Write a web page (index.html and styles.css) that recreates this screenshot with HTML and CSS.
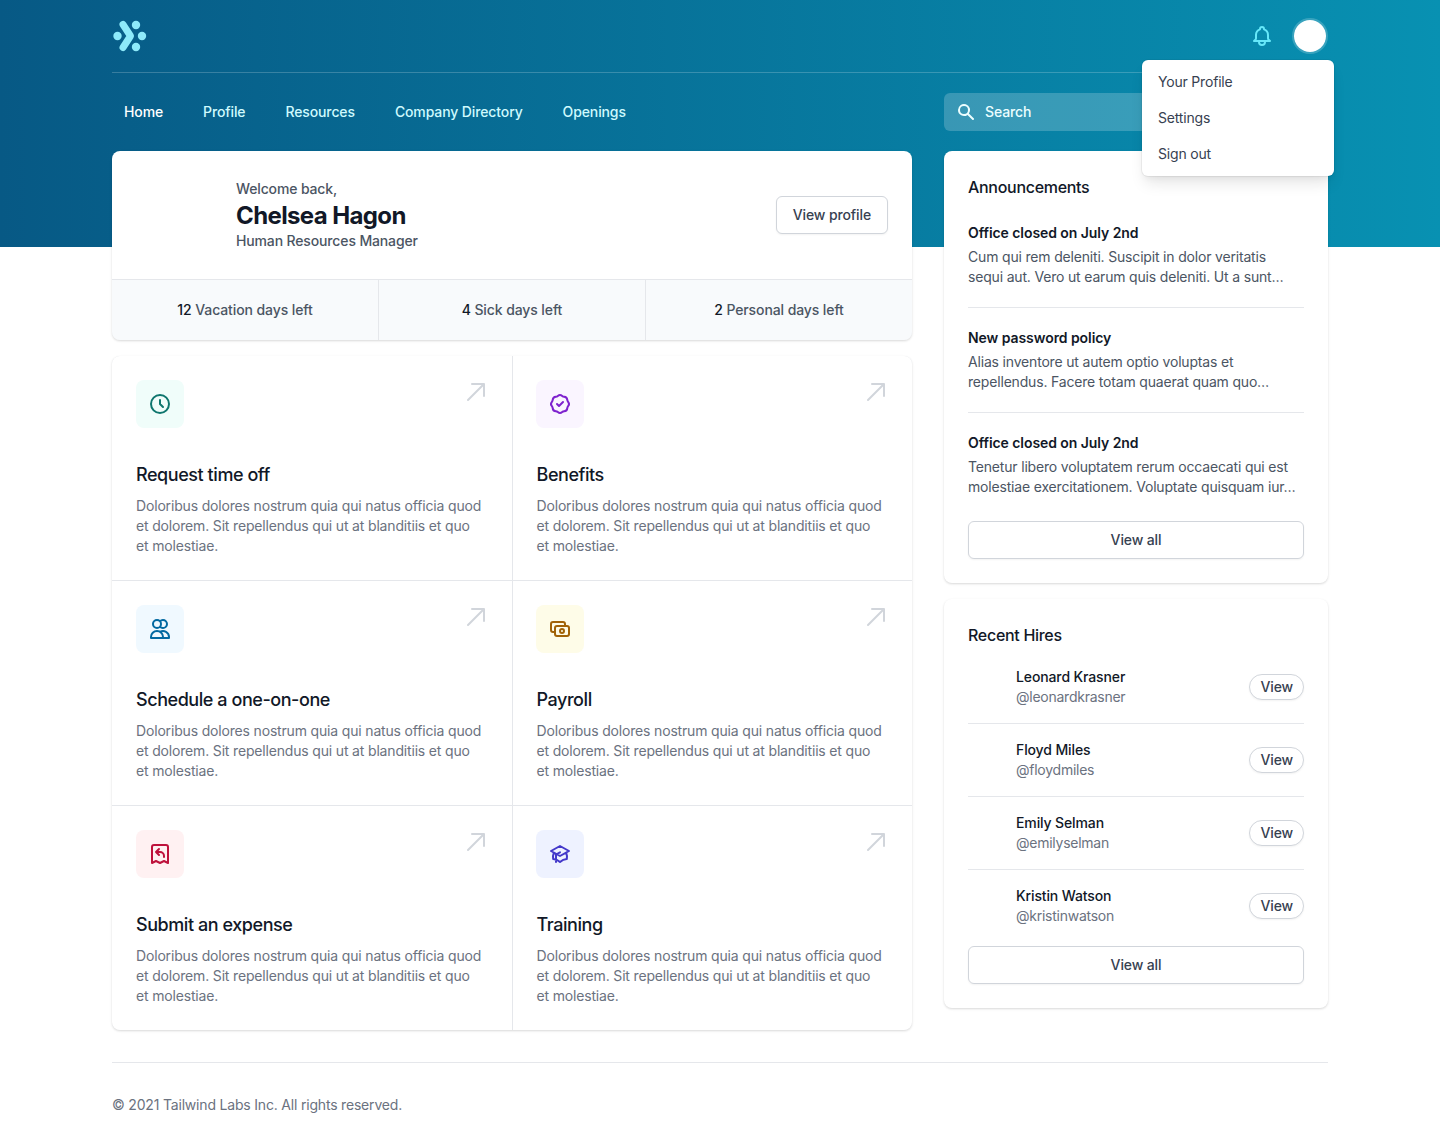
FILE: index.html
```html
<!DOCTYPE html>
<html lang="en">
<head>
<meta charset="utf-8">
<title>Dashboard</title>
<link rel="stylesheet" href="styles.css">
</head>
<body>
<header class="hero">
  <div class="container">
    <div class="topbar">
      <svg class="logo" viewBox="0 0 36 36" width="36" height="36" aria-hidden="true">
        <circle cx="5.5" cy="18" r="4.2"/><circle cx="24" cy="7" r="4.2"/><circle cx="30" cy="18" r="4.2"/><circle cx="24" cy="29" r="4.2"/>
        <path class="logo-chevron" d="M11 6.5 18.5 18 11 29.5"/>
      </svg>
      <div class="top-actions">
        <svg class="bell" viewBox="0 0 24 24" width="24" height="24" aria-hidden="true"><path d="M15 17h5l-1.405-1.405A2.032 2.032 0 0118 14.158V11a6.002 6.002 0 00-4-5.659V5a2 2 0 10-4 0v.341C7.67 6.165 6 8.388 6 11v3.159c0 .538-.214 1.055-.595 1.436L4 17h5m6 0v1a3 3 0 11-6 0v-1m6 0H9"/></svg>
        <div class="user">
          <div class="user-avatar"></div>
          <div class="menu">
            <div class="menu-item">Your Profile</div>
            <div class="menu-item">Settings</div>
            <div class="menu-item">Sign out</div>
          </div>
        </div>
      </div>
    </div>
    <div class="navrow">
      <nav class="nav">
        <a class="nav-link nav-active">Home</a>
        <a class="nav-link">Profile</a>
        <a class="nav-link">Resources</a>
        <a class="nav-link">Company Directory</a>
        <a class="nav-link">Openings</a>
      </nav>
      <div class="search">
        <svg viewBox="0 0 20 20" width="20" height="20" aria-hidden="true"><path fill-rule="evenodd" clip-rule="evenodd" d="M8 4a4 4 0 100 8 4 4 0 000-8zM2 8a6 6 0 1110.89 3.476l4.817 4.817a1 1 0 01-1.414 1.414l-4.816-4.816A6 6 0 012 8z"/></svg>
        <span>Search</span>
      </div>
    </div>
  </div>
</header>

<main class="container main">
  <div class="left">
    <section class="card">
      <div class="welcome">
        <div class="welcome-photo"></div>
        <div class="welcome-text">
          <p class="welcome-line">Welcome back,</p>
          <p class="welcome-name">Chelsea Hagon</p>
          <p class="welcome-line">Human Resources Manager</p>
        </div>
        <a class="btn btn-profile">View profile</a>
      </div>
      <div class="stats">
        <div class="stat"><b>12</b> Vacation days left</div>
        <div class="stat"><b>4</b> Sick days left</div>
        <div class="stat"><b>2</b> Personal days left</div>
      </div>
    </section>

    <section class="card actions">
      <article class="action">
        <svg class="arrow" viewBox="0 0 24 24" width="24" height="24" aria-hidden="true"><path d="M20 4h1a1 1 0 00-1-1v1zm-1 12a1 1 0 102 0h-2zM8 3a1 1 0 000 2V3zM3.293 19.293a1 1 0 101.414 1.414l-1.414-1.414zM19 4v12h2V4h-2zm1-1H8v2h12V3zm-.707.293l-16 16 1.414 1.414 16-16-1.414-1.414z"/></svg>
        <div class="tile tile-teal"><svg viewBox="0 0 24 24" width="24" height="24" aria-hidden="true"><path d="M12 8v4l3 3m6-3a9 9 0 11-18 0 9 9 0 0118 0z"/></svg></div>
        <h3 class="action-title">Request time off</h3>
        <p class="action-text">Doloribus dolores nostrum quia qui natus officia quod et dolorem. Sit repellendus qui ut at blanditiis et quo et molestiae.</p>
      </article>
      <article class="action">
        <svg class="arrow" viewBox="0 0 24 24" width="24" height="24" aria-hidden="true"><path d="M20 4h1a1 1 0 00-1-1v1zm-1 12a1 1 0 102 0h-2zM8 3a1 1 0 000 2V3zM3.293 19.293a1 1 0 101.414 1.414l-1.414-1.414zM19 4v12h2V4h-2zm1-1H8v2h12V3zm-.707.293l-16 16 1.414 1.414 16-16-1.414-1.414z"/></svg>
        <div class="tile tile-purple"><svg viewBox="0 0 24 24" width="24" height="24" aria-hidden="true"><path d="M9 12l2 2 4-4M7.835 4.697a3.42 3.42 0 001.946-.806 3.42 3.42 0 014.438 0 3.42 3.42 0 001.946.806 3.42 3.42 0 013.138 3.138 3.42 3.42 0 00.806 1.946 3.42 3.42 0 010 4.438 3.42 3.42 0 00-.806 1.946 3.42 3.42 0 01-3.138 3.138 3.42 3.42 0 00-1.946.806 3.42 3.42 0 01-4.438 0 3.42 3.42 0 00-1.946-.806 3.42 3.42 0 01-3.138-3.138 3.42 3.42 0 00-.806-1.946 3.42 3.42 0 010-4.438 3.42 3.42 0 00.806-1.946 3.42 3.42 0 013.138-3.138z"/></svg></div>
        <h3 class="action-title">Benefits</h3>
        <p class="action-text">Doloribus dolores nostrum quia qui natus officia quod et dolorem. Sit repellendus qui ut at blanditiis et quo et molestiae.</p>
      </article>
      <article class="action">
        <svg class="arrow" viewBox="0 0 24 24" width="24" height="24" aria-hidden="true"><path d="M20 4h1a1 1 0 00-1-1v1zm-1 12a1 1 0 102 0h-2zM8 3a1 1 0 000 2V3zM3.293 19.293a1 1 0 101.414 1.414l-1.414-1.414zM19 4v12h2V4h-2zm1-1H8v2h12V3zm-.707.293l-16 16 1.414 1.414 16-16-1.414-1.414z"/></svg>
        <div class="tile tile-blue"><svg viewBox="0 0 24 24" width="24" height="24" aria-hidden="true"><path d="M12 4.354a4 4 0 110 5.292M15 21H3v-1a6 6 0 0112 0v1zm0 0h6v-1a6 6 0 00-9-5.197M13 7a4 4 0 11-8 0 4 4 0 018 0z"/></svg></div>
        <h3 class="action-title">Schedule a one-on-one</h3>
        <p class="action-text">Doloribus dolores nostrum quia qui natus officia quod et dolorem. Sit repellendus qui ut at blanditiis et quo et molestiae.</p>
      </article>
      <article class="action">
        <svg class="arrow" viewBox="0 0 24 24" width="24" height="24" aria-hidden="true"><path d="M20 4h1a1 1 0 00-1-1v1zm-1 12a1 1 0 102 0h-2zM8 3a1 1 0 000 2V3zM3.293 19.293a1 1 0 101.414 1.414l-1.414-1.414zM19 4v12h2V4h-2zm1-1H8v2h12V3zm-.707.293l-16 16 1.414 1.414 16-16-1.414-1.414z"/></svg>
        <div class="tile tile-yellow"><svg viewBox="0 0 24 24" width="24" height="24" aria-hidden="true"><path d="M17 9V7a2 2 0 00-2-2H5a2 2 0 00-2 2v6a2 2 0 002 2h2m2 4h10a2 2 0 002-2v-6a2 2 0 00-2-2H9a2 2 0 00-2 2v6a2 2 0 002 2zm7-5a2 2 0 11-4 0 2 2 0 014 0z"/></svg></div>
        <h3 class="action-title">Payroll</h3>
        <p class="action-text">Doloribus dolores nostrum quia qui natus officia quod et dolorem. Sit repellendus qui ut at blanditiis et quo et molestiae.</p>
      </article>
      <article class="action">
        <svg class="arrow" viewBox="0 0 24 24" width="24" height="24" aria-hidden="true"><path d="M20 4h1a1 1 0 00-1-1v1zm-1 12a1 1 0 102 0h-2zM8 3a1 1 0 000 2V3zM3.293 19.293a1 1 0 101.414 1.414l-1.414-1.414zM19 4v12h2V4h-2zm1-1H8v2h12V3zm-.707.293l-16 16 1.414 1.414 16-16-1.414-1.414z"/></svg>
        <div class="tile tile-rose"><svg viewBox="0 0 24 24" width="24" height="24" aria-hidden="true"><path d="M16 15v-1a4 4 0 00-4-4H8m0 0l3 3m-3-3l3-3m9 14V5a2 2 0 00-2-2H6a2 2 0 00-2 2v16l4-2 4 2 4-2 4 2z"/></svg></div>
        <h3 class="action-title">Submit an expense</h3>
        <p class="action-text">Doloribus dolores nostrum quia qui natus officia quod et dolorem. Sit repellendus qui ut at blanditiis et quo et molestiae.</p>
      </article>
      <article class="action">
        <svg class="arrow" viewBox="0 0 24 24" width="24" height="24" aria-hidden="true"><path d="M20 4h1a1 1 0 00-1-1v1zm-1 12a1 1 0 102 0h-2zM8 3a1 1 0 000 2V3zM3.293 19.293a1 1 0 101.414 1.414l-1.414-1.414zM19 4v12h2V4h-2zm1-1H8v2h12V3zm-.707.293l-16 16 1.414 1.414 16-16-1.414-1.414z"/></svg>
        <div class="tile tile-indigo"><svg viewBox="0 0 24 24" width="24" height="24" aria-hidden="true"><path d="M12 14l9-5-9-5-9 5 9 5zm0 0l6.16-3.422a12.083 12.083 0 01.665 6.479A11.952 11.952 0 0012 20.055a11.952 11.952 0 00-6.824-2.998 12.078 12.078 0 01.665-6.479L12 14zm-4 6v-7.5l4-2.222"/></svg></div>
        <h3 class="action-title">Training</h3>
        <p class="action-text">Doloribus dolores nostrum quia qui natus officia quod et dolorem. Sit repellendus qui ut at blanditiis et quo et molestiae.</p>
      </article>
    </section>
  </div>

  <aside class="right">
    <section class="card panel">
      <h2 class="panel-title">Announcements</h2>
      <ul class="list">
        <li class="news">
          <h3 class="news-title">Office closed on July 2nd</h3>
          <p class="news-text">Cum qui rem deleniti. Suscipit in dolor veritatis sequi aut. Vero ut earum quis deleniti. Ut a sunt…</p>
        </li>
        <li class="news">
          <h3 class="news-title">New password policy</h3>
          <p class="news-text">Alias inventore ut autem optio voluptas et repellendus. Facere totam quaerat quam quo…</p>
        </li>
        <li class="news">
          <h3 class="news-title">Office closed on July 2nd</h3>
          <p class="news-text">Tenetur libero voluptatem rerum occaecati qui est molestiae exercitationem. Voluptate quisquam iur…</p>
        </li>
      </ul>
      <a class="btn btn-wide">View all</a>
    </section>

    <section class="card panel">
      <h2 class="panel-title">Recent Hires</h2>
      <ul class="list">
        <li class="hire">
          <div class="hire-photo"></div>
          <div class="hire-text"><p class="hire-name">Leonard Krasner</p><p class="hire-handle">@leonardkrasner</p></div>
          <a class="pill">View</a>
        </li>
        <li class="hire">
          <div class="hire-photo"></div>
          <div class="hire-text"><p class="hire-name">Floyd Miles</p><p class="hire-handle">@floydmiles</p></div>
          <a class="pill">View</a>
        </li>
        <li class="hire">
          <div class="hire-photo"></div>
          <div class="hire-text"><p class="hire-name">Emily Selman</p><p class="hire-handle">@emilyselman</p></div>
          <a class="pill">View</a>
        </li>
        <li class="hire">
          <div class="hire-photo"></div>
          <div class="hire-text"><p class="hire-name">Kristin Watson</p><p class="hire-handle">@kristinwatson</p></div>
          <a class="pill">View</a>
        </li>
      </ul>
      <a class="btn btn-wide">View all</a>
    </section>
  </aside>
</main>

<footer class="container">
  <div class="footer">© 2021 Tailwind Labs Inc. All rights reserved.</div>
</footer>
</body>
</html>
```

FILE: styles.css
```css
* { box-sizing: border-box; }
html, body { margin: 0; padding: 0; }
body {
  background: #fff;
  color: #111827;
  font-family: Inter, "Liberation Sans", sans-serif;
  font-size: 14px;
  line-height: 20px;
  letter-spacing: -0.19px;
}
h2, h3, p, ul { margin: 0; padding: 0; }
ul { list-style: none; }

.container { width: 1216px; margin: 0 auto; }

.hero {
  height: 247px;
  background: linear-gradient(to right, #075985, #0891b2);
}
.topbar {
  height: 73px;
  display: flex;
  align-items: center;
  justify-content: space-between;
  border-bottom: 1px solid rgba(255, 255, 255, .2);
}
.logo { fill: #8eeafa; display: block; }
.logo-chevron {
  fill: none;
  stroke: #8eeafa;
  stroke-width: 7;
  stroke-linecap: round;
  stroke-linejoin: round;
}
.top-actions { display: flex; align-items: center; gap: 18px; }
.bell { fill: none; stroke: #67e8f9; stroke-width: 2; stroke-linecap: round; stroke-linejoin: round; display: block; }
.user { position: relative; width: 36px; height: 36px; }
.user-avatar {
  width: 36px;
  height: 36px;
  border-radius: 50%;
  background: #fff;
  background-clip: padding-box;
  border: 2px solid rgba(255, 255, 255, .2);
}
.menu {
  position: absolute;
  top: 42px;
  right: -6px;
  width: 192px;
  padding: 4px 0;
  background: #fff;
  border-radius: 6px;
  box-shadow: 0 10px 15px -3px rgba(0,0,0,.1), 0 4px 6px -2px rgba(0,0,0,.05), 0 0 0 1px rgba(0,0,0,.05);
  z-index: 5;
}
.menu-item { padding: 8px 16px; color: #374151; }

.navrow {
  height: 78px;
  display: grid;
  grid-template-columns: 800px 384px;
  column-gap: 32px;
  align-items: center;
}
.nav { display: flex; gap: 16px; }
.nav-link { padding: 8px 12px; font-weight: 500; letter-spacing: -0.12px; color: #cffafe; }
.nav-active { color: #fff; }
.search {
  height: 38px;
  display: flex;
  align-items: center;
  gap: 9px;
  padding-left: 12px;
  border-radius: 6px;
  background: rgba(255, 255, 255, .2);
  color: #fff;
  font-weight: 500;
  letter-spacing: -0.12px;
}
.search svg { fill: #ecfeff; display: block; }
.search span { color: #ecfeff; }

.main {
  position: relative;
  margin-top: -96px;
  display: grid;
  grid-template-columns: 800px 384px;
  column-gap: 32px;
  align-items: start;
}
.left, .right { display: flex; flex-direction: column; gap: 16px; }

.card {
  background: #fff;
  border-radius: 8px;
  overflow: hidden;
  box-shadow: 0 1px 3px rgba(0,0,0,.1), 0 1px 2px rgba(0,0,0,.06);
}

.welcome {
  height: 128px;
  padding: 24px;
  display: flex;
  align-items: center;
  gap: 20px;
}
.welcome-photo { width: 80px; height: 80px; flex: none; }
.welcome-text { flex: 1; }
.welcome-line { font-weight: 500; letter-spacing: -0.14px; color: #4b5563; }
.welcome-name {
  padding-top: 2px;
  font-size: 24px;
  line-height: 30px;
  font-weight: 700;
  letter-spacing: -0.62px;
  color: #111827;
}

.btn {
  display: flex;
  align-items: center;
  justify-content: center;
  height: 38px;
  border: 1px solid #d1d5db;
  border-radius: 6px;
  background: #fff;
  color: #374151;
  font-weight: 500;
  letter-spacing: -0.12px;
  box-shadow: 0 1px 2px rgba(0,0,0,.05);
}
.btn-profile { padding: 0 16px; }
.btn-wide { margin-top: 4px; }

.stats {
  display: grid;
  grid-template-columns: repeat(3, 1fr);
  column-gap: 1px;
  background: #e5e7eb;
  border-top: 1px solid #e5e7eb;
}
.stat {
  padding: 20px 24px;
  background: #f8fafc;
  text-align: center;
  font-weight: 500;
  letter-spacing: -0.1px;
  color: #4b5563;
}
.stat b { font-weight: 500; color: #111827; }

.actions {
  display: grid;
  grid-template-columns: 1fr 1fr;
  gap: 1px;
  background: #e5e7eb;
}
.action { position: relative; padding: 24px; background: #fff; }
.arrow { position: absolute; top: 24px; right: 24px; fill: #d1d5db; }
.tile {
  width: 48px;
  height: 48px;
  border-radius: 8px;
  display: flex;
  align-items: center;
  justify-content: center;
}
.action:nth-child(even) .tile { margin-left: -0.5px; }
.tile svg { fill: none; stroke: currentColor; stroke-width: 2; stroke-linecap: round; stroke-linejoin: round; display: block; }
.tile-teal { background: #f0fdfa; color: #0f766e; }
.tile-purple { background: #faf5ff; color: #7e22ce; }
.tile-blue { background: #f0f9ff; color: #0369a1; }
.tile-yellow { background: #fefce8; color: #a16207; }
.tile-rose { background: #fff1f2; color: #be123c; }
.tile-indigo { background: #eef2ff; color: #4338ca; }
.action-title {
  margin-top: 33px;
  font-size: 18px;
  line-height: 28px;
  font-weight: 500;
  letter-spacing: -0.44px;
  color: #111827;
}
.action-text { margin-top: 7px; max-width: 347px; letter-spacing: -0.17px; color: #6b7280; }

.panel { padding: 24px; }
.panel-title {
  font-size: 16px;
  line-height: 24px;
  font-weight: 500;
  letter-spacing: -0.3px;
  color: #111827;
  margin-bottom: 4px;
}

.news { padding: 20px 0; border-bottom: 1px solid #e5e7eb; }
.news:last-child { border-bottom: 0; }
.news-title { font-size: 14px; line-height: 20px; font-weight: 600; letter-spacing: -0.07px; color: #111827; }
.news-text { margin-top: 4px; letter-spacing: -0.18px; color: #4b5563; }

.hire {
  display: flex;
  align-items: center;
  gap: 16px;
  padding: 16px 0;
  border-bottom: 1px solid #e5e7eb;
}
.hire:last-child { border-bottom: 0; }
.hire-photo { width: 32px; height: 32px; flex: none; }
.hire-text { flex: 1; }
.hire-name { font-weight: 500; letter-spacing: -0.12px; color: #111827; }
.hire-handle { letter-spacing: -0.25px; color: #6b7280; }
.pill {
  padding: 2px 10px;
  border: 1px solid #d1d5db;
  border-radius: 999px;
  background: #fff;
  color: #374151;
  font-weight: 500;
  letter-spacing: -0.12px;
  box-shadow: 0 1px 2px rgba(0,0,0,.05);
}

.footer {
  margin-top: 32px;
  padding: 32px 0;
  border-top: 1px solid #e5e7eb;
  color: #6b7280;
}
```
